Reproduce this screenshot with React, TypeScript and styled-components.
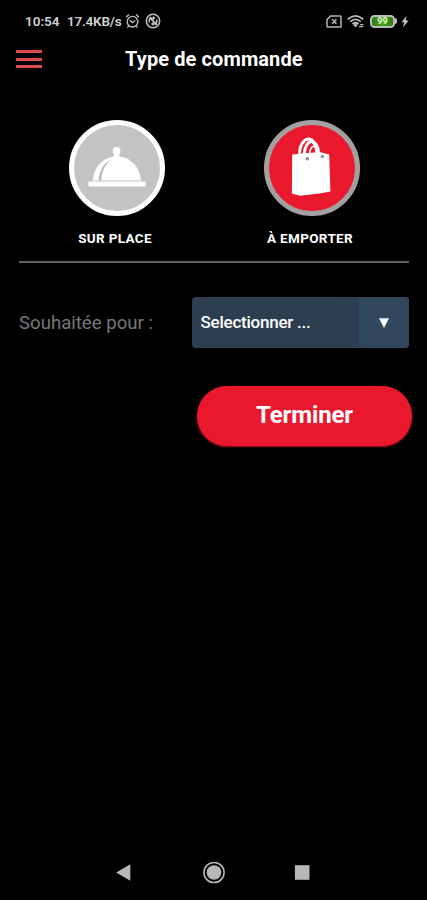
import React from "react";
import styled, { createGlobalStyle } from "styled-components";

const GlobalStyle = createGlobalStyle`
  * { box-sizing: border-box; }
  body { margin: 0; background: #000; }
  button { font: inherit; border: 0; padding: 0; background: none; color: inherit; }
`;

const Screen = styled.div`
  width: 427px;
  height: 900px;
  display: flex;
  flex-direction: column;
  background: #000;
  color: #fff;
  font-family: Roboto, "Liberation Sans", sans-serif;
  overflow: hidden;
`;

const StatusBar = styled.div`
  height: 42px;
  flex: none;
  display: flex;
  align-items: center;
  padding: 0 18px 0 25px;
  color: #d2d2d2;
`;

const StatusText = styled.span<{ $width: number; $spacing: number }>`
  width: ${(p) => p.$width}px;
  font-size: 13.5px;
  line-height: 20px;
  font-weight: 600;
  white-space: nowrap;
  letter-spacing: ${(p) => p.$spacing}px;
`;

const StatusIcon = styled.svg<{ $gap: number }>`
  display: block;
  flex: none;
  margin-left: ${(p) => p.$gap}px;
`;

const Spacer = styled.div`
  flex: 1;
`;

const Header = styled.header`
  height: 34px;
  flex: none;
  display: grid;
  grid-template-columns: 109px 1fr 109px;
  align-items: center;
  padding: 0 0 0 16px;
`;

const MenuButton = styled.button`
  width: 26px;
  height: 18px;
  display: flex;
  flex-direction: column;
  justify-content: space-between;
`;

const MenuBar = styled.span`
  height: 3px;
  width: 26px;
  background: #d94a4c;
`;

const Title = styled.h1`
  margin: 0;
  font-size: 20px;
  line-height: 32px;
  font-weight: 700;
  letter-spacing: 0.1px;
  white-space: nowrap;
`;

const Choices = styled.div`
  margin: 44px 18px 0 19px;
  display: grid;
  grid-template-columns: 1fr 1fr;
  height: 143px;
  border-bottom: 2px solid #626262;
`;

const Choice = styled.div`
  display: flex;
  flex-direction: column;
  align-items: center;
`;

const Disc = styled.div<{ $selected?: boolean }>`
  width: 96px;
  height: 96px;
  border-radius: 50%;
  border: 5px solid ${(p) => (p.$selected ? "#a2a0a1" : "#fff")};
  background: ${(p) => (p.$selected ? "#ea182c" : "#c3c3c3")};
`;

const DiscArt = styled.svg`
  display: block;
  width: 86px;
  height: 86px;
`;

const ChoiceLabel = styled.span`
  margin: 12px 3px 0 0;
  font-size: 13.5px;
  line-height: 20px;
  font-weight: 700;
  white-space: nowrap;
  letter-spacing: 0.33px;
`;

const FieldRow = styled.div`
  margin: 34px 18px 0 19px;
  display: flex;
  align-items: center;
  justify-content: space-between;
`;

const FieldLabel = styled.label`
  font-size: 18.6px;
  font-weight: 400;
  line-height: 24px;
  color: #777;
  white-space: nowrap;
`;

const Select = styled.div`
  width: 217px;
  height: 51px;
  display: flex;
  border-radius: 4px;
  overflow: hidden;
  background: #2c3e50;
`;

const SelectValue = styled.span`
  flex: 1;
  padding-left: 8.5px;
  font-size: 17px;
  line-height: 50px;
  font-weight: 500;
  letter-spacing: -0.24px;
  white-space: nowrap;
`;

const SelectArrow = styled.span`
  width: 50px;
  display: flex;
  align-items: center;
  justify-content: center;
  background: #31475e;
`;

const Submit = styled.button`
  align-self: flex-end;
  flex: none;
  margin: 38px 15px 0 0;
  width: 215px;
  height: 60px;
  padding-bottom: 2px;
  border-radius: 30px;
  background: #e9182d;
  box-shadow: 0 1px 2px #b01222;
  font-size: 24px;
  line-height: 58px;
  font-weight: 700;
  letter-spacing: -0.1px;
`;

const NavBar = styled.nav`
  height: 56px;
  flex: none;
  display: grid;
  grid-template-columns: repeat(3, 89px);
  justify-content: center;
  justify-items: center;
  align-items: center;
`;

const NavIcon = styled.svg`
  display: block;
  width: 24px;
  height: 24px;
  fill: #b7b7b7;
`;

function AlarmIcon() {
  return (
    <StatusIcon $gap={3} width="15" height="16" viewBox="0 0 15 16" fill="none" stroke="#bcbcbc" strokeWidth="1.4">
      <circle cx="7.5" cy="8.7" r="5.3" />
      <path d="M1 4.2 4 1.6M14 4.2 11 1.6M4.7 7.2l2.8 2.3 2.7-2M3.6 13.1 2.4 14.6M11.4 13.1l1.2 1.5" />
    </StatusIcon>
  );
}

function SyncIcon() {
  return (
    <StatusIcon $gap={5} width="16" height="16" viewBox="0 0 16 16" fill="none" stroke="#c4c4c4" strokeWidth="1.5">
      <circle cx="8" cy="8" r="6.7" />
      <path d="M4.2 9.6V7.6Q4.5 5 7 5h1.6M11.8 6.6v1.8q-.2 2.4-2.4 2.6H8" />
      <path d="M4.6 4.4 11.8 11.8" strokeWidth="1.8" />
      <path d="M8 3v4.2L10.6 5zM8.4 8.8V13L5.8 11z" fill="#c4c4c4" stroke="none" />
    </StatusIcon>
  );
}

function SimIcon() {
  return (
    <StatusIcon $gap={0} width="16" height="13" viewBox="0 0 16 13" fill="none" stroke="#b5b5b5" strokeWidth="1.5">
      <path d="M4.5 1h9.7q.8 0 .8.8v9.4q0 .8-.8.8H1.8q-.8 0-.8-.8V4.7z" />
      <path d="m6.2 4.3 4.2 4.5M10.4 4.3 6.2 8.8" />
    </StatusIcon>
  );
}

function WifiIcon() {
  return (
    <StatusIcon $gap={5} width="18" height="15" viewBox="0 0 18 15" fill="none" stroke="#bdbdbd" strokeWidth="1.8">
      <path d="M.8 5.2Q8.5-1.5 16.2 5.2M3.2 7.7Q8.5 3 13.8 7.7M5.5 10Q8.5 7.5 11.5 10" />
      <path d="m6.3 11 2.2-1.6 2.2 1.6-2.2 2.4z" fill="#bdbdbd" stroke="none" />
      <path d="M12 12.7h4M13.2 10.7h3.3" strokeWidth="1.2" />
    </StatusIcon>
  );
}

const Battery = styled.span`
  width: 28px;
  height: 13px;
  margin-left: 5px;
  display: flex;
  align-items: center;
`;

const BatteryBody = styled.span`
  width: 25px;
  height: 13px;
  border: 2px solid #bbb;
  border-radius: 4.5px;
  background: linear-gradient(90deg, #337d12, #49a21c 55%, #2e7410);
  color: #e5ffd9;
  font-size: 9px;
  font-weight: 700;
  line-height: 9px;
  text-align: center;
`;

const BatteryTip = styled.span`
  width: 2px;
  height: 6px;
  background: #bbb;
  border-radius: 0 2px 2px 0;
`;

export default function App() {
  return (
    <Screen>
      <GlobalStyle />
      <StatusBar>
        <StatusText $width={42} $spacing={0}>10:54</StatusText>
        <StatusText $width={55} $spacing={-0.22}>17.4KB/s</StatusText>
        <AlarmIcon />
        <SyncIcon />
        <Spacer />
        <SimIcon />
        <WifiIcon />
        <Battery>
          <BatteryBody>99</BatteryBody>
          <BatteryTip />
        </Battery>
        <StatusIcon $gap={3} width="8" height="13" viewBox="0 0 8 13">
          <path d="M5.8.8.5 7.2h2.7L2 12.4 7.6 5.6H4.7z" fill="#c4c4c4" />
        </StatusIcon>
      </StatusBar>

      <Header>
        <MenuButton aria-label="Menu">
          <MenuBar />
          <MenuBar />
          <MenuBar />
        </MenuButton>
        <Title>Type de commande</Title>
      </Header>

      <Choices>
        <Choice>
          <Disc>
            <DiscArt viewBox="0 0 86 86" fill="#fff">
              <rect x="14.5" y="56.5" width="57" height="5" rx="0.8" />
              <circle cx="42.6" cy="25.7" r="3.8" />
              <path d="M39.8 27h5.6v4.4C58 33 66 42.5 67 55.5H18.7C19.8 43 27.4 33.4 39.8 31.4z" />
              <path d="M37.5 34.3C29.5 38.4 25 46 24.7 55.5h2.6c.2-8.5 3.8-16 10.2-21.2z" fill="#bababa" />
            </DiscArt>
          </Disc>
          <ChoiceLabel>SUR PLACE</ChoiceLabel>
        </Choice>
        <Choice>
          <Disc $selected>
            <DiscArt viewBox="0 0 86 86">
              <path d="M23.2 29.5 50.4 27l9.8 2.5 1.2 37-9.3 1.8-21 2.4-8.2-2.2z" fill="#fff" />
              <g fill="none" stroke="#fff" strokeWidth="3" strokeLinecap="round">
                <path d="M30.7 30C29.9 20.5 35.4 13.3 40.4 14.1c4 .7 7 6.5 7.5 13.5" />
                <path d="M35.2 29c.5-7 4-13.5 8.1-12.3 4 1.2 6 6 6.4 11.3" />
              </g>
              <path d="M40.7 28c.2-4.5 2.4-7 4.5-6.5 2.2.5 3.4 3 3.5 6.5" fill="none" stroke="#fff" strokeWidth="1.6" />
              <circle cx="38.3" cy="33.7" r="1.9" fill="#9b9394" />
              <circle cx="53.4" cy="31.5" r="1.8" fill="#9b9394" />
            </DiscArt>
          </Disc>
          <ChoiceLabel>À EMPORTER</ChoiceLabel>
        </Choice>
      </Choices>

      <FieldRow>
        <FieldLabel>Souhaitée pour :</FieldLabel>
        <Select role="combobox" aria-label="Souhaitée pour">
          <SelectValue>Selectionner ...</SelectValue>
          <SelectArrow>
            <svg width="10" height="10" viewBox="0 0 10 10">
              <path d="M0 .3h10L5 10z" fill="#fff" />
            </svg>
          </SelectArrow>
        </Select>
      </FieldRow>

      <Submit>Terminer</Submit>
      <Spacer />

      <NavBar>
        <NavIcon viewBox="0 0 24 24">
          <path d="M3.2 12.5 17.3 4.2v16.6z" />
        </NavIcon>
        <NavIcon viewBox="0 0 24 24">
          <circle cx="12" cy="12.5" r="10.1" fill="none" stroke="#b7b7b7" strokeWidth="1.5" />
          <circle cx="12" cy="12.5" r="7.3" />
        </NavIcon>
        <NavIcon viewBox="0 0 24 24">
          <path d="M3.9 5.2h14.6v14.6H3.9z" />
        </NavIcon>
      </NavBar>
    </Screen>
  );
}
